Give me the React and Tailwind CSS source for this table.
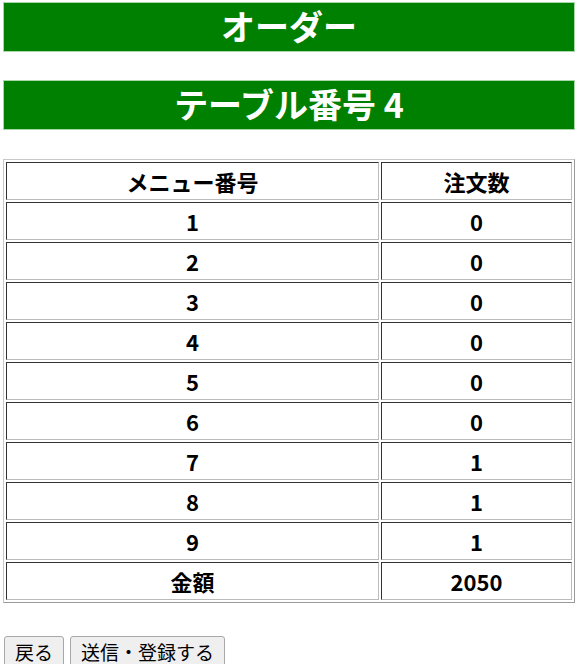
export default function App() {
  const rows = [
    ["1", "0"], ["2", "0"], ["3", "0"], ["4", "0"], ["5", "0"],
    ["6", "0"], ["7", "1"], ["8", "1"], ["9", "1"], ["金額", "2050"],
  ];
  const font = { fontFamily: '"Noto Sans CJK JP", "Noto Sans", sans-serif' };
  return (
    <div className="w-[578px] h-[664px] bg-white overflow-hidden pt-[2px] px-[3px]" style={font}>
      <h1 className="h-[50px] bg-[#008000] border border-[#a8d8a8] text-white text-[34px] font-bold flex items-center justify-center leading-none pb-[2px]">
        オーダー
      </h1>
      <h1 className="mt-[28px] h-[50px] bg-[#008000] border border-[#a8d8a8] text-white text-[34px] font-bold flex items-center justify-center leading-none pb-[2px]">
        テーブル番号 4
      </h1>
      <table className="mt-[29px] w-[572px] border border-[#9a9a9a] border-t-[#c8c8c8] border-l-[#c8c8c8] border-separate border-spacing-[2px] text-[22px] font-bold text-black">
        <tbody>
          <tr className="h-[38px]">
            <th className="w-[373px] border border-[#333] border-r-[#bbb] border-b-[#bbb] p-0 leading-none">メニュー番号</th>
            <th className="border border-[#333] border-r-[#bbb] border-b-[#bbb] p-0 leading-none">注文数</th>
          </tr>
          {rows.map(([a, b]) => (
            <tr key={a} className="h-[38px]">
              <td className="border border-[#333] border-r-[#bbb] border-b-[#bbb] p-0 text-center leading-none">{a}</td>
              <td className="border border-[#333] border-r-[#bbb] border-b-[#bbb] p-0 text-center leading-none">{b}</td>
            </tr>
          ))}
        </tbody>
      </table>
      <div className="mt-[33px] flex gap-[6px] pl-[1px]">
        <button className="h-[32px] px-[10px] pb-[2px] bg-[#efefef] border border-[#a8a8a8] rounded-[3px] text-[19px] leading-none text-black">戻る</button>
        <button className="h-[32px] px-[10px] pb-[2px] bg-[#efefef] border border-[#a8a8a8] rounded-[3px] text-[19px] leading-none text-black">送信・登録する</button>
      </div>
    </div>
  );
}
